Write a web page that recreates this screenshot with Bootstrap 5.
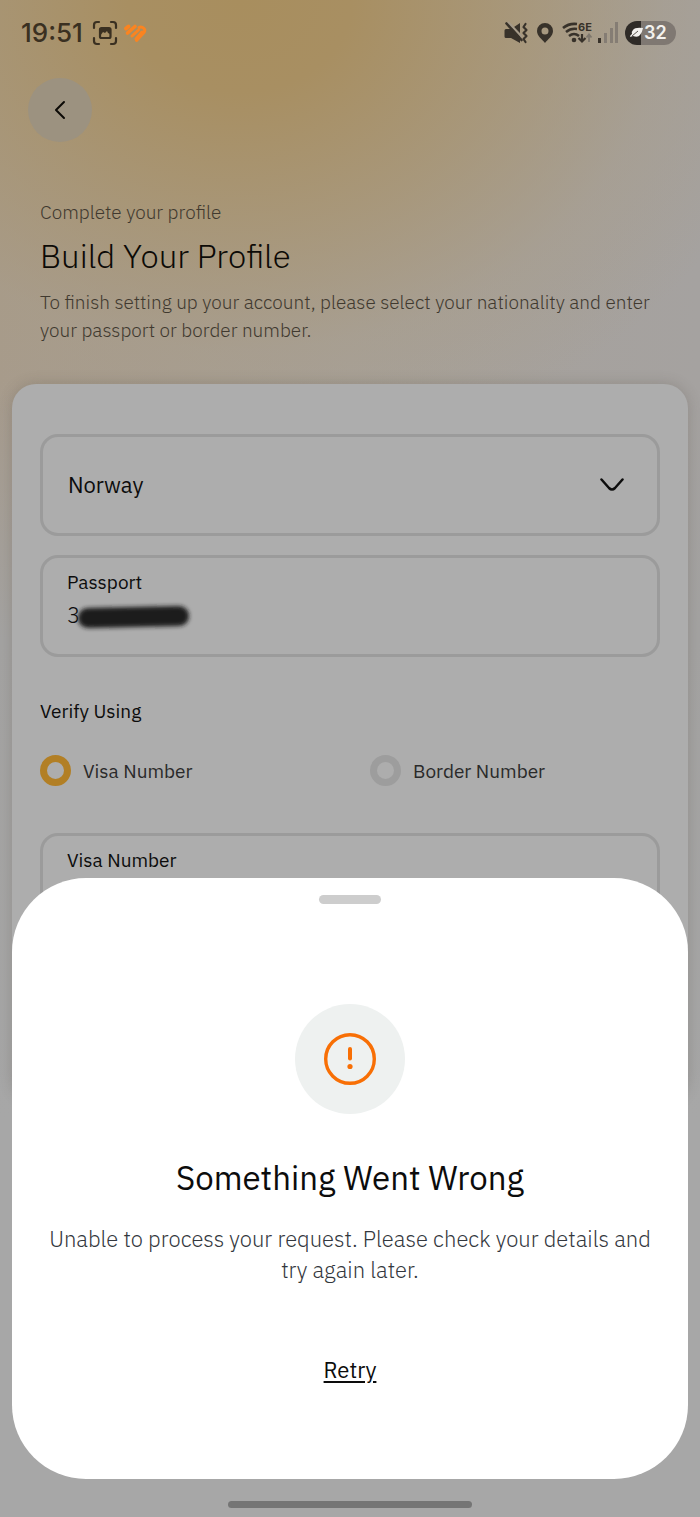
<!DOCTYPE html>
<html lang="en">
<head>
<meta charset="utf-8">
<meta name="viewport" content="width=device-width, initial-scale=1">
<title>Build Your Profile</title>
<link href="https://cdn.jsdelivr.net/npm/bootstrap@5.3.0/dist/css/bootstrap.min.css" rel="stylesheet">
<style>
  body {
    font-family: "IBM Plex Sans", Roboto, "Liberation Sans", sans-serif;
    font-size: 19px; line-height: 28px; color: #0c0c0c;
    background: #a7a7a7;
  }
  .screen {
    background:
      radial-gradient(ellipse 560px 460px at 240px 0, #a88e5e 0, #a88f62 20%, rgba(168,148,112,.75) 50%, rgba(168,155,132,.4) 76%, rgba(167,165,162,0) 100%),
      linear-gradient(180deg, rgba(167,167,167,0) 380px, #a4a3a2 640px, #a7a7a7 1120px),
      linear-gradient(90deg, #a79b8c 0, #a7a19a 50%, #a5a2a0 100%);
  }
  .status { height: 66px; padding: 0 24px 0 21px; color: #3a3021; }
  .clock { font: 500 26px/32px Inter, Roboto, sans-serif; }
  .battery { width: 51px; height: 24px; border-radius: 12px; color: #f3f1ee;
    background: linear-gradient(90deg, #2f2b27 0 16px, #7f7872 16px);
    font: 600 18px/24px Inter, Roboto, sans-serif; }
  .back { width: 64px; height: 64px; margin: 12px 28px 0; background: #9c9280; }
  .intro { padding: 56px 40px 40px; color: #40392f; font-weight: 300; }
  .intro h1 { font-size: 33px; line-height: 44px; font-weight: 300; color: #0c0a06; margin: 8px 0 10px; }
  .form-panel { background: #adadad; border-radius: 24px; margin: 0 12px; padding: 50px 28px 166px; box-shadow: 0 0 14px rgba(70,60,50,.22); }
  .field { border: 3px solid #9b9b9b; border-radius: 18px; height: 102px; }
  .field + .field { margin-top: 19px; }
  .field select, .field input { appearance: none; border: 0; background: transparent; color: inherit; outline: 0; width: 100%; }
  .field select { font-size: 22px; height: 96px; padding: 0 25px; }
  .field label { padding-top: 10px; }
  .field input { font-size: 22px; height: 36px; padding: 0; font-weight: 300; }
  .chevron { right: 33px; top: 36px; pointer-events: none; }
  .smudge { left: 27px; top: 42px; }
  .verify { margin: 40px 0 47px; }
  .verify legend { font-size: 19px; line-height: 28px; margin-bottom: 30px; }
  .verify .row { --bs-gutter-x: 40px; }
  .choice { gap: 12px; }
  .choice input { appearance: none; width: 31px; height: 31px; margin: 0; border: 7px solid #9d9d9d; border-radius: 50%; }
  .choice input:checked { border-color: #b27f25; }
  .choice label { color: #2a2a2a; }
  .sheet { left: 12px; right: 12px; bottom: 38px; border-radius: 74px; padding: 17px 36px 94px; }
  .grip { width: 62px; height: 9px; border-radius: 5px; background: #cdcdcd; }
  .alert-disc { width: 110px; height: 110px; background: #eef1f0; margin: 100px 0 42px; }
  .sheet h2 { font-size: 33px; line-height: 44px; font-weight: 400; margin: 0; }
  .sheet p { font-size: 22px; line-height: 31px; font-weight: 300; color: #33373d; margin: 23px 0 70px; }
  .sheet a { font-size: 22px; line-height: 30px; color: #0c0c0c; text-underline-offset: 3px; text-decoration-thickness: 2px; }
  .home-bar { width: 244px; height: 7px; border-radius: 4px; background: #757575; bottom: 9px; }
</style>
</head>
<body>
<div class="screen min-vh-100">
  <header class="status d-flex align-items-center justify-content-between">
    <div class="d-flex align-items-center">
      <span class="clock">19:51</span>
      <svg class="ms-2" width="28" height="28" viewBox="0 0 28 28" fill="none" stroke="#3a3021" stroke-width="2.2" stroke-linecap="round" aria-hidden="true">
        <path d="M3 9V6q0-3 3-3h2M20 3h2q3 0 3 3v3M25 19v3q0 3-3 3h-2M8 25H6q-3 0-3-3v-3"/>
        <rect x="9" y="9" width="10.500" height="10" rx="1.500"/><path d="M9 9h10v6l-2-1-1-2-2 2-2-1-3 4z" fill="#3a3021" stroke="none"/>
      </svg>
      <svg class="ms-1" width="25" height="22" viewBox="0 0 25 22" fill="none" stroke="#fb8420" stroke-linecap="round" stroke-linejoin="round" aria-hidden="true">
        <path d="M3 6.500l2.500-2" stroke-width="4"/>
        <path d="M4.500 11L12 4.500" stroke-width="3.600"/>
        <path d="M9 14l6.500-6" stroke-width="3"/>
        <path d="M13.500 18.500l7.500-8q1.500-2.500 0-4-2.500-2.500-5-1" stroke-width="3"/>
        <path d="M13 17l6-7" stroke-width="3"/>
      </svg>
    </div>
    <div class="d-flex align-items-center gap-1">
      <svg width="28" height="26" viewBox="0 0 28 26" aria-hidden="true">
        <path d="M4 9h5l9-6v20l-9-5H4q-1.500 0-1.500-1.500v-6Q2.500 9 4 9z" fill="#38322a"/>
        <path d="M6 2l14 15" stroke="#a59a89" stroke-width="2.500"/><path d="M4.500 3.500l15 16.500" stroke="#38322a" stroke-width="2.600" stroke-linecap="round"/>
        <path d="M23.500 4l-2 3 3 3-3 3 3 3-3 3 2 3" fill="none" stroke="#38322a" stroke-width="2.200" stroke-linejoin="round" stroke-linecap="round"/>
      </svg>
      <svg width="24" height="24" viewBox="0 0 24 24" aria-hidden="true"><path fill="#38322a" fill-rule="evenodd" d="M11 2a8 8 0 0 0-8 8c0 5 5 8 8 12 3-4 8-7 8-12a8 8 0 0 0-8-8zm0 4.500a3.500 3.500 0 1 1 0 7 3.500 3.500 0 0 1 0-7z"/></svg>
      <svg width="31" height="26" viewBox="0 0 31 26" aria-hidden="true">
        <g fill="none" stroke="#38322a" stroke-width="2.600"><path d="M1 8Q7 3 15 4M4 12q5-4 11-3M7 16q5-4 10 0"/><path d="M20 14v7M16.500 18l3.500 3.500 3.500-3.500" stroke-width="2.200"/><path d="M27 22v-7M24.500 17.500l2.500-3 2.500 3" stroke="#7e776d" stroke-width="1.800"/></g>
        <circle cx="12" cy="20" r="2.300" fill="#38322a"/>
        <text x="16" y="11" font-family="Inter, Roboto, sans-serif" font-weight="700" font-size="11" fill="#38322a">6E</text>
      </svg>
      <svg width="24" height="24" viewBox="0 0 24 24" aria-hidden="true"><path d="M1 17h3v5H1z" fill="#38322a"/><path d="M7 12h3v10H7zM13 7h3v15h-3zM18 1h3v21h-3z" fill="#857d74"/></svg>
      <div class="battery d-flex align-items-center">
        <svg class="ms-1" width="15" height="14" viewBox="0 0 15 14" aria-hidden="true"><path d="M14 2Q6 1 4 4q-2 2-1 4-2 1-2 3l3-1q5 2 7-1 2-2 3-7z" fill="#f3f1ee"/><path d="M3 10l6-5" stroke="#5b554f"/></svg>
        <span>32</span>
      </div>
    </div>
  </header>

  <button type="button" class="back btn border-0 rounded-circle p-0 d-flex align-items-center justify-content-center" aria-label="Back">
    <svg width="20" height="22" viewBox="0 0 20 22" fill="none" stroke="#0c0a06" stroke-width="2" stroke-linecap="round" stroke-linejoin="round"><path d="M14 3l-8 8 8 8"/></svg>
  </button>

  <section class="intro">
    <div>Complete your profile</div>
    <h1>Build Your Profile</h1>
    <div>To finish setting up your account, please select your nationality and enter your passport or border number.</div>
  </section>

  <form class="form-panel" id="profile">
    <div class="field position-relative">
      <select aria-label="Nationality"><option>Norway</option></select>
      <svg class="chevron position-absolute" width="24" height="24" viewBox="0 0 24 24" fill="none" stroke="#0c0c0c" stroke-width="2.500" stroke-linecap="round"><path d="M1.500 6.500l7.500 8.500q3 3 6 0l7.500-8.500"/></svg>
    </div>
    <div class="field position-relative px-4">
      <label class="d-block" for="passport">Passport</label>
      <input id="passport" type="text" value="3">
      <svg class="smudge position-absolute" width="130" height="34" viewBox="0 0 130 34" aria-hidden="true">
        <defs><filter id="soft" filterUnits="userSpaceOnUse" x="0" y="0" width="130" height="34"><feGaussianBlur stdDeviation="2"/></filter></defs>
        <path d="M18 18l91-2" stroke="#1c1c1c" stroke-width="20" stroke-linecap="round" filter="url(#soft)"/>
      </svg>
    </div>
    <fieldset class="verify">
      <legend>Verify Using</legend>
      <div class="row">
        <div class="choice col-6 d-flex align-items-center"><input type="radio" name="verify" id="by-visa" checked><label for="by-visa">Visa Number</label></div>
        <div class="choice col-6 d-flex align-items-center"><input type="radio" name="verify" id="by-border"><label for="by-border">Border Number</label></div>
      </div>
    </fieldset>
    <div class="field px-4">
      <label class="d-block" for="visa">Visa Number</label>
      <input id="visa" type="text">
    </div>
  </form>
</div>

<section class="sheet position-fixed bg-white d-flex flex-column align-items-center text-center" role="dialog" aria-labelledby="err-title">
  <div class="grip"></div>
  <div class="alert-disc rounded-circle d-flex align-items-center justify-content-center">
    <svg width="54" height="54" viewBox="0 0 54 54" aria-hidden="true"><circle cx="27" cy="27" r="24.300" fill="none" stroke="#f86f05" stroke-width="3.400"/><path d="M27 17v9.500" stroke="#f86f05" stroke-width="4" stroke-linecap="round"/><circle cx="27" cy="34.500" r="2.600" fill="#f86f05"/></svg>
  </div>
  <h2 id="err-title">Something Went Wrong</h2>
  <p>Unable to process your request. Please check your details and try again later.</p>
  <a href="#profile">Retry</a>
</section>
<div class="home-bar position-fixed start-50 translate-middle-x"></div>
<script src="https://cdn.jsdelivr.net/npm/bootstrap@5.3.0/dist/js/bootstrap.bundle.min.js"></script>
</body>
</html>
